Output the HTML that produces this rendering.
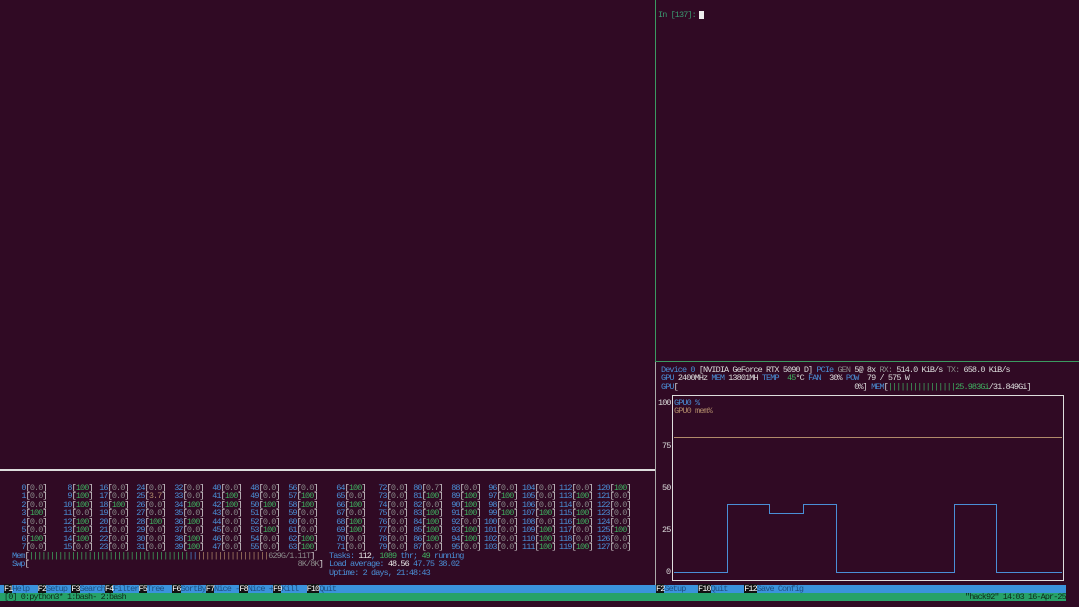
<!DOCTYPE html>
<html><head><meta charset="utf-8"><style>
html,body{margin:0;padding:0;width:1079px;height:607px;overflow:hidden;background:#300a24;}
body{position:relative;font-family:"Liberation Mono","DejaVu Sans Mono",monospace;font-size:8.5px;letter-spacing:-0.9px;line-height:8.45px;color:#ddd;}
.a{position:absolute;white-space:pre;}
.n{color:#4a8fd6}.g{color:#8a8a8a}.v{color:#3fb060}.w{color:#e8e8e8}.o{color:#b08a6a}
.k{background:#111;color:#fff}
</style></head><body>
<div class="a" style="left:655px;top:0;width:1px;height:362px;background:#3b9a60"></div>
<div class="a" style="left:655px;top:362px;width:1px;height:223px;background:#aaa"></div>
<div class="a" style="left:655px;top:361px;width:424px;height:1px;background:#3b9a60"></div>
<div class="a" style="left:0;top:469px;width:655px;height:2px;background:#ddd"></div>
<div class="a" style="left:658px;top:11px;color:#3b9a70">In [137]: </div>
<div class="a" style="left:699px;top:11px;width:5px;height:8px;background:#eee"></div>

<div class="a" style="left:13px;top:484px"><span class="n">  0</span>[<span class="g">0.0</span>]
<span class="n">  1</span>[<span class="g">0.0</span>]
<span class="n">  2</span>[<span class="g">0.0</span>]
<span class="n">  3</span>[<span class="v">100</span>]
<span class="n">  4</span>[<span class="g">0.0</span>]
<span class="n">  5</span>[<span class="g">0.0</span>]
<span class="n">  6</span>[<span class="v">100</span>]
<span class="n">  7</span>[<span class="g">0.0</span>]</div>
<div class="a" style="left:59px;top:484px"><span class="n">  8</span>[<span class="v">100</span>]
<span class="n">  9</span>[<span class="v">100</span>]
<span class="n"> 10</span>[<span class="v">100</span>]
<span class="n"> 11</span>[<span class="g">0.0</span>]
<span class="n"> 12</span>[<span class="v">100</span>]
<span class="n"> 13</span>[<span class="v">100</span>]
<span class="n"> 14</span>[<span class="v">100</span>]
<span class="n"> 15</span>[<span class="g">0.0</span>]</div>
<div class="a" style="left:95px;top:484px"><span class="n"> 16</span>[<span class="g">0.0</span>]
<span class="n"> 17</span>[<span class="g">0.0</span>]
<span class="n"> 18</span>[<span class="v">100</span>]
<span class="n"> 19</span>[<span class="g">0.0</span>]
<span class="n"> 20</span>[<span class="g">0.0</span>]
<span class="n"> 21</span>[<span class="g">0.0</span>]
<span class="n"> 22</span>[<span class="g">0.0</span>]
<span class="n"> 23</span>[<span class="g">0.0</span>]</div>
<div class="a" style="left:132px;top:484px"><span class="n"> 24</span>[<span class="g">0.0</span>]
<span class="n"> 25</span>[<span class="o">3.7</span>]
<span class="n"> 26</span>[<span class="g">0.0</span>]
<span class="n"> 27</span>[<span class="g">0.0</span>]
<span class="n"> 28</span>[<span class="v">100</span>]
<span class="n"> 29</span>[<span class="g">0.0</span>]
<span class="n"> 30</span>[<span class="g">0.0</span>]
<span class="n"> 31</span>[<span class="g">0.0</span>]</div>
<div class="a" style="left:170px;top:484px"><span class="n"> 32</span>[<span class="g">0.0</span>]
<span class="n"> 33</span>[<span class="g">0.0</span>]
<span class="n"> 34</span>[<span class="v">100</span>]
<span class="n"> 35</span>[<span class="g">0.0</span>]
<span class="n"> 36</span>[<span class="v">100</span>]
<span class="n"> 37</span>[<span class="g">0.0</span>]
<span class="n"> 38</span>[<span class="v">100</span>]
<span class="n"> 39</span>[<span class="v">100</span>]</div>
<div class="a" style="left:208px;top:484px"><span class="n"> 40</span>[<span class="g">0.0</span>]
<span class="n"> 41</span>[<span class="v">100</span>]
<span class="n"> 42</span>[<span class="v">100</span>]
<span class="n"> 43</span>[<span class="g">0.0</span>]
<span class="n"> 44</span>[<span class="g">0.0</span>]
<span class="n"> 45</span>[<span class="g">0.0</span>]
<span class="n"> 46</span>[<span class="g">0.0</span>]
<span class="n"> 47</span>[<span class="g">0.0</span>]</div>
<div class="a" style="left:246px;top:484px"><span class="n"> 48</span>[<span class="g">0.0</span>]
<span class="n"> 49</span>[<span class="g">0.0</span>]
<span class="n"> 50</span>[<span class="v">100</span>]
<span class="n"> 51</span>[<span class="g">0.0</span>]
<span class="n"> 52</span>[<span class="g">0.0</span>]
<span class="n"> 53</span>[<span class="v">100</span>]
<span class="n"> 54</span>[<span class="g">0.0</span>]
<span class="n"> 55</span>[<span class="g">0.0</span>]</div>
<div class="a" style="left:284px;top:484px"><span class="n"> 56</span>[<span class="g">0.0</span>]
<span class="n"> 57</span>[<span class="v">100</span>]
<span class="n"> 58</span>[<span class="v">100</span>]
<span class="n"> 59</span>[<span class="g">0.0</span>]
<span class="n"> 60</span>[<span class="g">0.0</span>]
<span class="n"> 61</span>[<span class="g">0.0</span>]
<span class="n"> 62</span>[<span class="v">100</span>]
<span class="n"> 63</span>[<span class="v">100</span>]</div>
<div class="a" style="left:332px;top:484px"><span class="n"> 64</span>[<span class="v">100</span>]
<span class="n"> 65</span>[<span class="g">0.0</span>]
<span class="n"> 66</span>[<span class="v">100</span>]
<span class="n"> 67</span>[<span class="g">0.0</span>]
<span class="n"> 68</span>[<span class="v">100</span>]
<span class="n"> 69</span>[<span class="v">100</span>]
<span class="n"> 70</span>[<span class="g">0.0</span>]
<span class="n"> 71</span>[<span class="g">0.0</span>]</div>
<div class="a" style="left:374px;top:484px"><span class="n"> 72</span>[<span class="g">0.0</span>]
<span class="n"> 73</span>[<span class="g">0.0</span>]
<span class="n"> 74</span>[<span class="g">0.0</span>]
<span class="n"> 75</span>[<span class="g">0.0</span>]
<span class="n"> 76</span>[<span class="g">0.0</span>]
<span class="n"> 77</span>[<span class="g">0.0</span>]
<span class="n"> 78</span>[<span class="g">0.0</span>]
<span class="n"> 79</span>[<span class="g">0.0</span>]</div>
<div class="a" style="left:409px;top:484px"><span class="n"> 80</span>[<span class="g">0.7</span>]
<span class="n"> 81</span>[<span class="v">100</span>]
<span class="n"> 82</span>[<span class="g">0.0</span>]
<span class="n"> 83</span>[<span class="v">100</span>]
<span class="n"> 84</span>[<span class="v">100</span>]
<span class="n"> 85</span>[<span class="v">100</span>]
<span class="n"> 86</span>[<span class="v">100</span>]
<span class="n"> 87</span>[<span class="g">0.0</span>]</div>
<div class="a" style="left:447px;top:484px"><span class="n"> 88</span>[<span class="g">0.0</span>]
<span class="n"> 89</span>[<span class="v">100</span>]
<span class="n"> 90</span>[<span class="v">100</span>]
<span class="n"> 91</span>[<span class="v">100</span>]
<span class="n"> 92</span>[<span class="g">0.0</span>]
<span class="n"> 93</span>[<span class="v">100</span>]
<span class="n"> 94</span>[<span class="v">100</span>]
<span class="n"> 95</span>[<span class="g">0.0</span>]</div>
<div class="a" style="left:484px;top:484px"><span class="n"> 96</span>[<span class="g">0.0</span>]
<span class="n"> 97</span>[<span class="v">100</span>]
<span class="n"> 98</span>[<span class="g">0.0</span>]
<span class="n"> 99</span>[<span class="v">100</span>]
<span class="n">100</span>[<span class="g">0.0</span>]
<span class="n">101</span>[<span class="g">0.0</span>]
<span class="n">102</span>[<span class="g">0.0</span>]
<span class="n">103</span>[<span class="g">0.0</span>]</div>
<div class="a" style="left:522px;top:484px"><span class="n">104</span>[<span class="g">0.0</span>]
<span class="n">105</span>[<span class="g">0.0</span>]
<span class="n">106</span>[<span class="g">0.0</span>]
<span class="n">107</span>[<span class="v">100</span>]
<span class="n">108</span>[<span class="g">0.0</span>]
<span class="n">109</span>[<span class="v">100</span>]
<span class="n">110</span>[<span class="v">100</span>]
<span class="n">111</span>[<span class="v">100</span>]</div>
<div class="a" style="left:559px;top:484px"><span class="n">112</span>[<span class="g">0.0</span>]
<span class="n">113</span>[<span class="v">100</span>]
<span class="n">114</span>[<span class="g">0.0</span>]
<span class="n">115</span>[<span class="v">100</span>]
<span class="n">116</span>[<span class="v">100</span>]
<span class="n">117</span>[<span class="g">0.0</span>]
<span class="n">118</span>[<span class="g">0.0</span>]
<span class="n">119</span>[<span class="v">100</span>]</div>
<div class="a" style="left:597px;top:484px"><span class="n">120</span>[<span class="v">100</span>]
<span class="n">121</span>[<span class="g">0.0</span>]
<span class="n">122</span>[<span class="g">0.0</span>]
<span class="n">123</span>[<span class="g">0.0</span>]
<span class="n">124</span>[<span class="g">0.0</span>]
<span class="n">125</span>[<span class="v">100</span>]
<span class="n">126</span>[<span class="g">0.0</span>]
<span class="n">127</span>[<span class="g">0.0</span>]</div>

<div class="a" style="left:12px;top:552px"><span class="n">Mem</span>[<span class="v">||||||||||||||||||||||||||||||||||||||</span><span class="n">||</span><span class="o">|||||||||||||||||</span><span class="g">629G/1.11T</span>]
<span class="n">Swp</span>[                                                                <span class="g">8K/8K</span>]</div>
<div class="a" style="left:329px;top:552px"><span class="n">Tasks: </span><span class="w">112</span><span class="n">, </span><span class="v">1089</span><span class="n"> thr; </span><span class="v">49</span><span class="n"> running</span>
<span class="n">Load average: </span><span class="w">48.56 </span><span class="n">47.75 38.02</span>
<span class="n">Uptime: 2 days, 21:48:43</span></div>

<div class="a" style="left:0;top:585px;width:655px;height:8px;background:#3a93dc"></div>
<div class="a" style="left:655px;top:585px;width:411px;height:8px;background:#3a93dc"></div>
<div class="a" style="left:4px;top:585px;color:#1e4f80"><span class="k">F1</span>Help  <span class="k">F2</span>Setup <span class="k">F3</span>Search<span class="k">F4</span>Filter<span class="k">F5</span>Tree  <span class="k">F6</span>SortBy<span class="k">F7</span>Nice -<span class="k">F8</span>Nice +<span class="k">F9</span>Kill  <span class="k">F10</span>Quit</div>
<div class="a" style="left:656px;top:585px;color:#1e4f80"><span class="k">F2</span>Setup   <span class="k">F10</span>Quit    <span class="k">F12</span>Save Config</div>
<div class="a" style="left:0;top:593px;width:1066px;height:8px;background:#26a269"></div>
<div class="a" style="left:4px;top:593px;color:#0e2a1a">[0] 0:python3* 1:bash- 2:bash</div>
<div class="a" style="left:965px;top:593px;color:#0e2a1a">"hack92" 14:03 16-Apr-25</div>

<div class="a" style="left:661px;top:366px"><span class="n">Device 0 </span>[NVIDIA GeForce RTX 5090 D] <span class="n">PCIe </span><span class="g">GEN </span>5@ 8x <span class="g">RX: </span>514.0 KiB/s <span class="g">TX: </span>658.0 KiB/s
<span class="n">GPU </span>2400MHz <span class="n">MEM </span>13801MH <span class="n">TEMP  </span><span class="v">45</span>°C <span class="n">FAN  </span>30% <span class="n">POW  </span>79 / 575 W
<span class="n">GPU</span>[                                          0%] <span class="n">MEM</span>[<span class="v">||||||||||||||||25.983Gi</span>/31.849Gi]</div>

<svg class="a" style="left:0;top:0" width="1079" height="607">
<rect x="672.5" y="395.5" width="391" height="185" fill="none" stroke="#ddd" stroke-width="1"/>
<line x1="674" y1="437.5" x2="1062" y2="437.5" stroke="#b08a6a" stroke-width="1"/>
<polyline fill="none" stroke="#4a8fd6" stroke-width="1" points="674,572.5 727.5,572.5 727.5,504.5 769.5,504.5 769.5,513.5 803.5,513.5 803.5,504.5 836.5,504.5 836.5,572.5 954.5,572.5 954.5,504.5 996.5,504.5 996.5,572.5 1062,572.5"/>
</svg>
<div class="a" style="left:658px;top:399px">100</div>
<div class="a" style="left:662px;top:442px">75</div>
<div class="a" style="left:662px;top:484px">50</div>
<div class="a" style="left:662px;top:526px">25</div>
<div class="a" style="left:666px;top:568px">0</div>
<div class="a" style="left:674px;top:399px"><span class="n">GPU0 %</span>
<span class="o">GPU0 mem%</span></div>
</body></html>
